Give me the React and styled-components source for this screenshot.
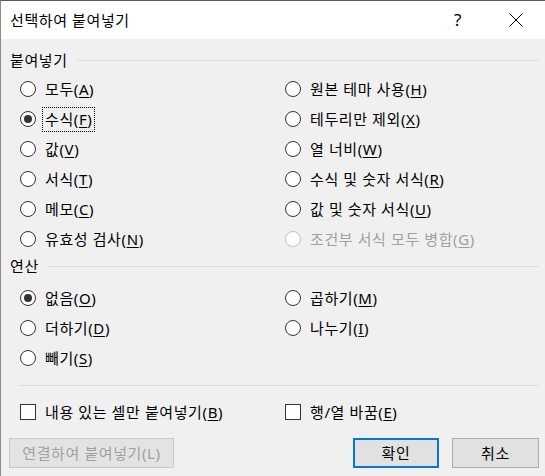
import React from 'react';
import styled, { createGlobalStyle } from 'styled-components';

const Global = createGlobalStyle`
  html, body { margin: 0; padding: 0; background: #f0f0f0; }
  body { font-family: "Noto Sans", "Noto Sans CJK KR", sans-serif; }
  * { box-sizing: border-box; }
`;

const Dialog = styled.div`
  width: 545px;
  height: 476px;
  border-top: 1px solid #5a5a5a;
  border-left: 1px solid #8c8c8c;
  background: #f0f0f0;
  display: flex;
  flex-direction: column;
  font-size: 15px;
  letter-spacing: 0.6px;
  color: #000;
  overflow: hidden;
`;

const TitleBar = styled.div`
  height: 38px;
  flex: none;
  background: #fff;
  display: flex;
  align-items: center;
  padding-left: 9px;
`;

const Title = styled.div`
  flex: 1;
  font-size: 15px;
  line-height: 22px;
`;

const CaptionButton = styled.div`
  width: 58px;
  height: 38px;
  display: flex;
  align-items: center;
  justify-content: center;
  font-size: 17px;
  line-height: 22px;
`;

const Body = styled.div`
  flex: 1;
  display: flex;
  flex-direction: column;
  padding: 0 6px 0 9px;
`;

const GroupHeader = styled.div`
  display: flex;
  align-items: center;
  height: 22px;
  margin-top: ${p => p.$top}px;
`;

const GroupLabel = styled.span`
  line-height: 22px;
  white-space: nowrap;
`;

const GroupLine = styled.div`
  flex: 1;
  height: 1px;
  background: #dcdcdc;
  margin-left: 9px;
`;

const OptionGrid = styled.div`
  display: grid;
  grid-template-columns: 265px 1fr;
  grid-auto-rows: 30px;
  padding-left: 10px;
  margin-top: ${p => p.$top}px;
`;

const Item = styled.div`
  display: flex;
  align-items: center;
  gap: 6px;
  color: ${p => (p.$disabled ? '#a0a0a0' : '#000')};
`;

const RadioCircle = styled.span`
  width: 16px;
  height: 16px;
  flex: none;
  border-radius: 50%;
  border: 1px solid ${p => (p.$disabled ? '#c2c2c2' : '#333')};
  background: #fff;
  display: flex;
  align-items: center;
  justify-content: center;
  &::after {
    content: '';
    display: ${p => (p.$checked ? 'block' : 'none')};
    width: 8px;
    height: 8px;
    border-radius: 50%;
    background: #333;
  }
`;

const CheckBox = styled.span`
  width: 16px;
  height: 16px;
  flex: none;
  border: 1px solid #333;
  background: #fff;
`;

const Label = styled.span`
  display: inline-flex;
  align-items: center;
  height: 25px;
  padding: 0 2px;
  line-height: 23px;
  white-space: nowrap;
  border: 1px dotted ${p => (p.$focused ? '#000' : 'transparent')};
`;

const Key = styled.span`
  text-decoration: underline;
  text-underline-offset: 2px;
`;

const Separator = styled.div`
  height: 1px;
  background: #dadada;
  margin: 12px 0 0 9px;
`;

const ButtonRow = styled.div`
  display: flex;
  align-items: center;
  margin: 11px 0 0 -1px;
`;

const Button = styled.div`
  height: 30px;
  width: ${p => p.$w}px;
  display: flex;
  align-items: center;
  justify-content: center;
  background: ${p => (p.$disabled ? '#e3e3e3' : '#e1e1e1')};
  border: ${p => (p.$primary ? '2px solid #0078d7' : p.$disabled ? '1px solid #c9c9c9' : '1px solid #adadad')};
  color: ${p => (p.$disabled ? '#a0a0a0' : '#000')};
  font-size: 15px;
  line-height: 22px;
  white-space: nowrap;
  margin-left: ${p => p.$ml || 0}px;
`;

const Spacer = styled.div`
  flex: 1;
`;

function Text({ t, k }) {
  return (
    <>
      {t}(<Key>{k}</Key>)
    </>
  );
}

function Radio({ t, k, checked, disabled, focused }) {
  return (
    <Item $disabled={disabled}>
      <RadioCircle $checked={checked} $disabled={disabled} />
      <Label $focused={focused}>
        <Text t={t} k={k} />
      </Label>
    </Item>
  );
}

function Check({ t, k }) {
  return (
    <Item>
      <CheckBox />
      <Label>
        <Text t={t} k={k} />
      </Label>
    </Item>
  );
}

const pasteOptions = [
  { t: '모두', k: 'A' },
  { t: '원본 테마 사용', k: 'H' },
  { t: '수식', k: 'F', checked: true, focused: true },
  { t: '테두리만 제외', k: 'X' },
  { t: '값', k: 'V' },
  { t: '열 너비', k: 'W' },
  { t: '서식', k: 'T' },
  { t: '수식 및 숫자 서식', k: 'R' },
  { t: '메모', k: 'C' },
  { t: '값 및 숫자 서식', k: 'U' },
  { t: '유효성 검사', k: 'N' },
  { t: '조건부 서식 모두 병합', k: 'G', disabled: true },
];

const opOptions = [
  { t: '없음', k: 'O', checked: true },
  { t: '곱하기', k: 'M' },
  { t: '더하기', k: 'D' },
  { t: '나누기', k: 'I' },
  { t: '빼기', k: 'S' },
];

export default function App() {
  return (
    <>
      <Global />
      <Dialog>
        <TitleBar>
          <Title>선택하여 붙여넣기</Title>
          <CaptionButton>?</CaptionButton>
          <CaptionButton>
            <svg width="14" height="14" viewBox="0 0 14 14">
              <path d="M0.5 0.5 L13.5 13.5 M13.5 0.5 L0.5 13.5" stroke="#000" strokeWidth="1" fill="none" />
            </svg>
          </CaptionButton>
        </TitleBar>
        <Body>
          <GroupHeader $top={10}>
            <GroupLabel>붙여넣기</GroupLabel>
            <GroupLine />
          </GroupHeader>
          <OptionGrid $top={3}>
            {pasteOptions.map(o => (
              <Radio key={o.k} {...o} />
            ))}
          </OptionGrid>
          <GroupHeader $top={1}>
            <GroupLabel>연산</GroupLabel>
            <GroupLine />
          </GroupHeader>
          <OptionGrid $top={6}>
            {opOptions.map(o => (
              <Radio key={o.k} {...o} />
            ))}
          </OptionGrid>
          <Separator />
          <OptionGrid $top={11}>
            <Check t="내용 있는 셀만 붙여넣기" k="B" />
            <Check t="행/열 바꿈" k="E" />
          </OptionGrid>
          <ButtonRow>
            <Button $w={165} $disabled>
              연결하여 붙여넣기(L)
            </Button>
            <Spacer />
            <Button $w={86} $primary>
              확인
            </Button>
            <Button $w={87} $ml={13}>
              취소
            </Button>
          </ButtonRow>
        </Body>
      </Dialog>
    </>
  );
}
